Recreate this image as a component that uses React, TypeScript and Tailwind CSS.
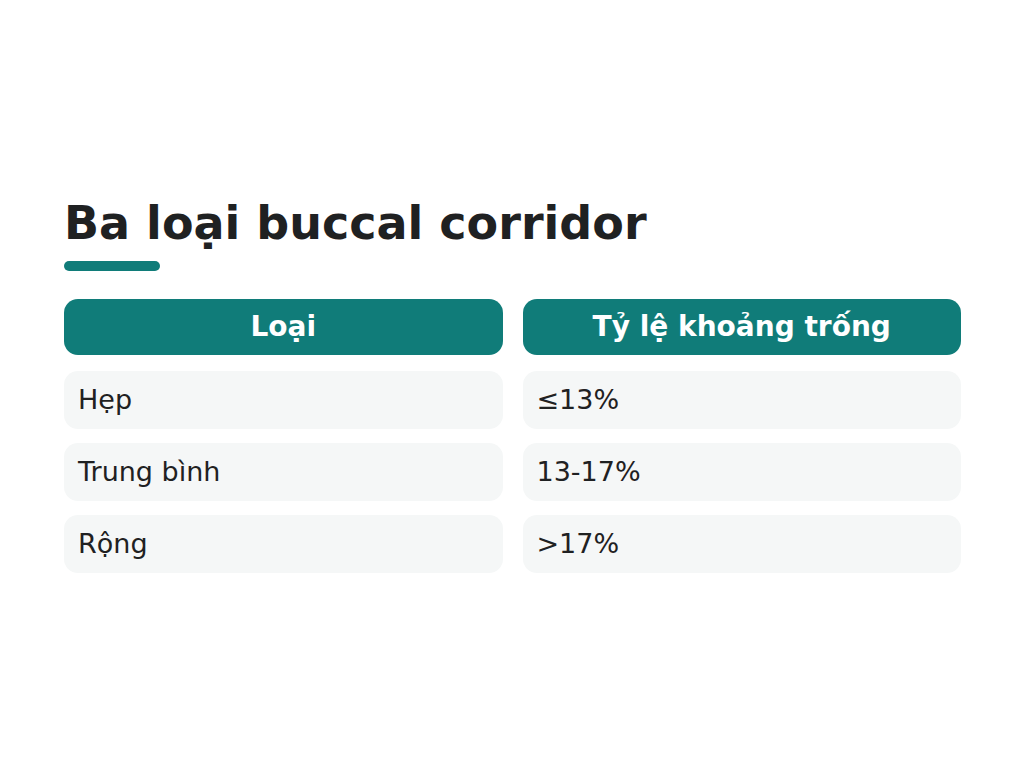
export default function App() {
  const rows = [
    { kind: 'Hẹp', ratio: '≤13%' },
    { kind: 'Trung bình', ratio: '13-17%' },
    { kind: 'Rộng', ratio: '>17%' },
  ];

  return (
    <div className="w-[1024px] h-[768px] bg-white flex flex-col justify-center pl-16 pr-[63px] font-['DejaVu_Sans',sans-serif] text-[#1f2122]">
      <h1 className="text-[46px] font-bold leading-[56px]">Ba loại buccal corridor</h1>
      <div className="mt-[10px] w-24 h-[10px] rounded-full bg-[#107c79]" />

      <div className="mt-7 grid grid-cols-2 gap-x-5">
        <div className="h-14 rounded-[14px] bg-[#107c79] text-white font-bold text-[28px] flex items-center justify-center">
          Loại
        </div>
        <div className="h-14 rounded-[14px] bg-[#107c79] text-white font-bold text-[28px] flex items-center justify-center">
          Tỷ lệ khoảng trống
        </div>
      </div>

      <div className="mt-4 flex flex-col gap-[14px]">
        {rows.map((r) => (
          <div key={r.kind} className="grid grid-cols-2 gap-x-5">
            <div className="h-[58px] rounded-[14px] bg-[#f5f7f7] flex items-center px-[14px] text-[27px]">
              {r.kind}
            </div>
            <div className="h-[58px] rounded-[14px] bg-[#f5f7f7] flex items-center px-[14px] text-[27px]">
              {r.ratio}
            </div>
          </div>
        ))}
      </div>
    </div>
  );
}
